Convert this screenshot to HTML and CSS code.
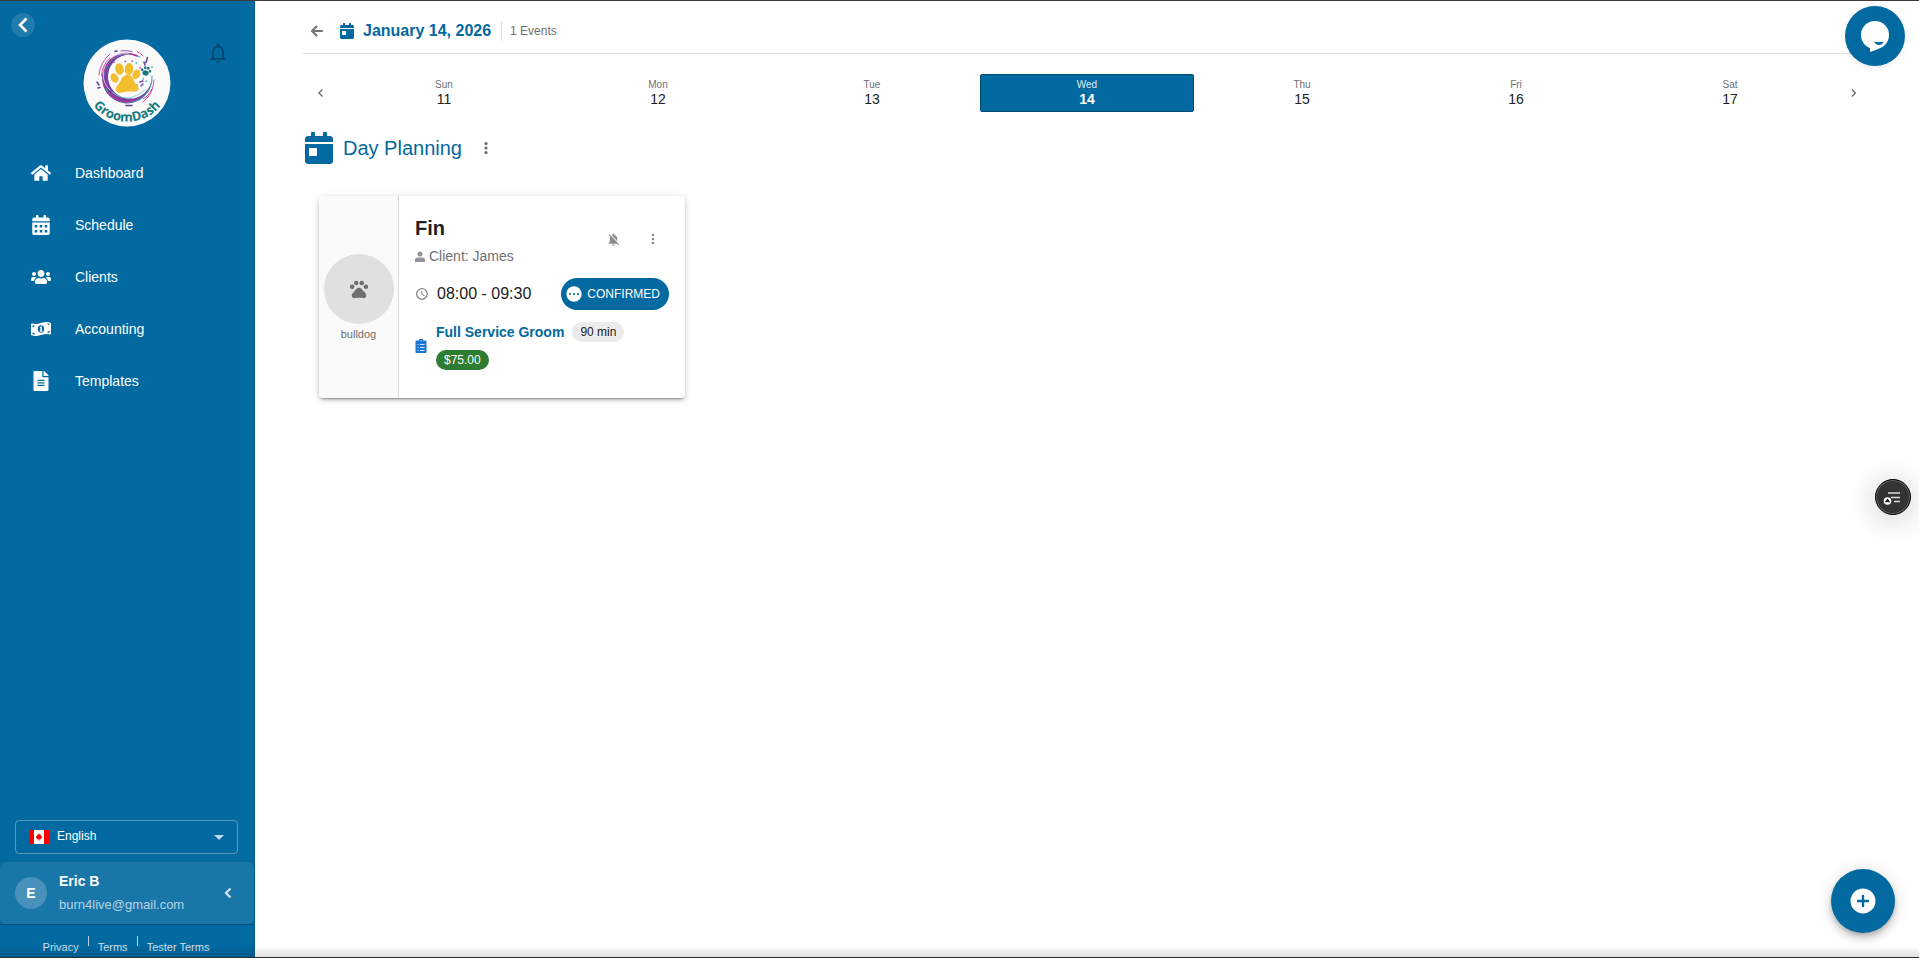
FILE: index.html
```html
<!DOCTYPE html>
<html lang="en">
<head>
<meta charset="utf-8">
<title>GroomDash – Day Planning</title>
<link rel="stylesheet" href="styles.css">
</head>
<body>
<svg class="sprite" aria-hidden="true">
  <symbol id="calendar-day" viewBox="0 0 448 512"><path d="M0 464c0 26.500 21.500 48 48 48h352c26.500 0 48-21.500 48-48V192H0v272zm64-192c0-8.800 7.200-16 16-16h96c8.800 0 16 7.200 16 16v96c0 8.800-7.200 16-16 16H80c-8.800 0-16-7.200-16-16v-96zM400 64h-48V16c0-8.800-7.200-16-16-16h-32c-8.800 0-16 7.200-16 16v48H160V16c0-8.800-7.200-16-16-16h-32c-8.800 0-16 7.200-16 16v48H48C21.500 64 0 85.500 0 112v48h448v-48c0-26.500-21.500-48-48-48z"/></symbol>
  <symbol id="dots" viewBox="0 0 24 24"><circle cx="12" cy="6" r="2"/><circle cx="12" cy="12" r="2"/><circle cx="12" cy="18" r="2"/></symbol>
  <symbol id="paw" viewBox="0 0 24 24"><circle cx="4.500" cy="9.500" r="2.500"/><circle cx="9" cy="5.500" r="2.500"/><circle cx="15" cy="5.500" r="2.500"/><circle cx="19.500" cy="9.500" r="2.500"/><path d="M17.340 14.860c-.87-1.020-1.600-1.890-2.480-2.910-.46-.54-1.050-1.080-1.750-1.320-.11-.04-.22-.07-.33-.09-.25-.04-.52-.04-.78-.04s-.53 0-.79.05c-.11.02-.22.05-.33.09-.7.24-1.280.78-1.750 1.320-.87 1.020-1.600 1.890-2.480 2.910-1.310 1.310-2.920 2.760-2.620 4.790.29 1.020 1.020 2.030 2.330 2.320.73.15 3.060-.44 5.540-.44h.18c2.480 0 4.810.58 5.540.44 1.310-.29 2.040-1.310 2.330-2.320.31-2.040-1.300-3.490-2.610-4.800z"/></symbol>
</svg>

<aside class="sidebar">
  <header class="brand">
    <button class="collapse" type="button" aria-label="Collapse menu">
      <svg width="24" height="24" viewBox="0 0 24 24" fill="none" stroke="currentColor" stroke-width="2.600"><path d="M15.500 5.500L9 12l6.500 6.500"/></svg>
    </button>
    <svg class="logo" viewBox="0 0 88 88" role="img" aria-label="GroomDash">
      <circle cx="44" cy="44" r="43.500" fill="#fafafa"/>
      <path fill="#74439f" d="M57 18A25 25 0 1 0 69 37A22 22 0 1 1 57 18Z"/>
      <g fill="none" stroke-linecap="round">
        <path d="M57 18A24.300 24.300 0 1 0 69 37" stroke="#35a9b5" stroke-width="1"/>
        <path d="M54 17A23.300 23.300 0 0 0 23 49" stroke="#b9279a" stroke-width="1.600"/>
        <path d="M26 53Q36 66 52 61" stroke="#b9279a" stroke-width="1.600"/>
        <path d="M46 15A21 21 0 0 0 27 51" stroke="#cfe9ee" stroke-width=".8"/>
        <path d="M29 53Q44 66 62 51" stroke="#7fd0d3" stroke-width=".9"/>
        <path d="M16 36Q17 23 27 15M18.500 37Q19 26 27 19M54 12.500Q58 14 60 17" stroke="#d63a9b" stroke-width=".9"/>
        <path d="M71 41Q70 56 60 63M69 50Q66 57 60 60" stroke="#d63a9b" stroke-width=".9"/>
        <path d="M38 12Q43 11 49 12.500" stroke="#74439f" stroke-width=".9"/>
        <path d="M43 66.500H49M32 12.500l2-.4M64.500 18.500l-1.500 5M61 23l1 3M14 43l2 3M15 49l2-.5" stroke="#5c3d9c" stroke-width="1.500"/>
        <path d="M57 43l3-1M58 47l2-2M53 47l1-1" stroke="#74439f" stroke-width="1.400"/>
        <path d="M42 22.500h.5M49 22h.5M57 29h.5M31 23v.5" stroke="#d63a9b" stroke-width="1.500"/>
        <path d="M53 24h.5M69 28v.5M60 40h.5M63 42v.5" stroke="#35b0b5" stroke-width="1.500"/>
      </g>
      <g fill="#f2be2e">
        <ellipse cx="36.500" cy="30" rx="4.200" ry="5.900" transform="rotate(-12 36.500 30)"/>
        <ellipse cx="46" cy="30" rx="4.200" ry="5.900" transform="rotate(6 46 30)"/>
        <ellipse cx="31.500" cy="39" rx="3.700" ry="4.900" transform="rotate(-28 31.500 39)"/>
        <ellipse cx="53.300" cy="35.300" rx="3.700" ry="4.900" transform="rotate(25 53.300 35.300)"/>
        <path d="M43 36C47 35 50 38 51 42C52 45 56 46 55.500 50C55 54 50 52 44.500 52.500C39 53 34 56 33 51C32 47 36 46 37.500 42C38.500 39 40 37 43 36Z"/>
      </g>
      <g fill="#177a7e" transform="rotate(12 63 32)"><ellipse cx="63" cy="34" rx="3.200" ry="2.600"/><circle cx="59" cy="31.500" r="1.300"/><circle cx="61.700" cy="29" r="1.400"/><circle cx="64.700" cy="29" r="1.400"/><circle cx="67" cy="31.500" r="1.300"/></g>
      <path id="logo-arc" d="M8 64A44 44 0 0 0 80 64" fill="none"/>
      <text class="logo-text"><textPath href="#logo-arc" startOffset="50%" text-anchor="middle">GroomDash</textPath></text>
    </svg>
    <button class="bell" type="button" aria-label="Notifications">
      <svg width="24" height="24" viewBox="0 0 24 24" fill="currentColor"><path d="M12 22c1.100 0 2-.9 2-2h-4c0 1.100.9 2 2 2zm6-6v-5c0-3.070-1.630-5.640-4.500-6.320V4c0-.83-.67-1.500-1.500-1.500s-1.500.67-1.500 1.500v.68C7.640 5.360 6 7.920 6 11v5l-2 2v1h16v-1l-2-2zm-2 1H8v-6c0-2.480 1.510-4.500 4-4.500s4 2.020 4 4.500v6z"/></svg>
    </button>
  </header>

  <nav class="menu">
    <a href="#dashboard"><svg viewBox="0 0 576 512"><path d="M280.370 148.260L96 300.110V464a16 16 0 0 0 16 16l112.060-.29a16 16 0 0 0 15.920-16V368a16 16 0 0 1 16-16h64a16 16 0 0 1 16 16v95.640a16 16 0 0 0 16 16.050L464 480a16 16 0 0 0 16-16V300L295.670 148.260a12.190 12.190 0 0 0-15.300 0zM571.600 251.470L488 182.560V44.050a12 12 0 0 0-12-12h-56a12 12 0 0 0-12 12v72.610L318.470 43a48 48 0 0 0-61 0L4.340 251.470a12 12 0 0 0-1.600 16.900l25.500 31A12 12 0 0 0 45.150 301l235.220-193.740a12.190 12.190 0 0 1 15.300 0L530.900 301a12 12 0 0 0 16.900-1.600l25.500-31a12 12 0 0 0-1.700-16.930z"/></svg>Dashboard</a>
    <a href="#schedule"><svg viewBox="0 0 448 512"><path fill-rule="evenodd" d="M0 192H448V464a48 48 0 0 1-48 48H48a48 48 0 0 1-48-48ZM64 256v64h64v-64ZM192 256v64h64v-64ZM320 256v64h64v-64ZM64 384v64h64v-64ZM192 384v64h64v-64ZM320 384v64h64v-64ZM400 64h-48V16c0-8.800-7.200-16-16-16h-32c-8.800 0-16 7.200-16 16v48H160V16c0-8.800-7.200-16-16-16h-32c-8.800 0-16 7.200-16 16v48H48C21.500 64 0 85.500 0 112v48h448v-48c0-26.500-21.500-48-48-48z"/></svg>Schedule</a>
    <a href="#clients"><svg viewBox="0 0 640 512"><path d="M96 224c35.300 0 64-28.700 64-64s-28.700-64-64-64-64 28.700-64 64 28.700 64 64 64zm448 0c35.300 0 64-28.700 64-64s-28.700-64-64-64-64 28.700-64 64 28.700 64 64 64zm32 32h-64c-17.600 0-33.500 7.100-45.100 18.600 40.300 22.100 68.900 62 75.100 109.400h66c17.700 0 32-14.300 32-32v-32c0-35.300-28.700-64-64-64zm-256 0c61.900 0 112-50.100 112-112S381.900 32 320 32 208 82.100 208 144s50.100 112 112 112zm76.800 32h-8.300c-20.800 10-43.900 16-68.500 16s-47.600-6-68.500-16h-8.300C179.600 288 128 339.600 128 403.200V432c0 26.500 21.500 48 48 48h288c26.500 0 48-21.500 48-48v-28.800c0-63.600-51.600-115.200-115.200-115.200zm-223.700-13.400C161.500 263.100 145.600 256 128 256H64c-35.300 0-64 28.700-64 64v32c0 17.700 14.300 32 32 32h65.900c6.300-47.400 34.900-87.300 75.200-109.400z"/></svg>Clients</a>
    <a href="#accounting"><svg viewBox="0 0 640 512"><path d="M621.160 54.460C582.370 38.190 543.550 32 504.750 32c-123.170 0-246.330 62.340-369.500 62.340-30.890 0-61.760-3.920-92.650-13.720C20 74 0 92.320 0 110.810v317.260c0 12.630 7.230 24.600 18.840 29.460C57.630 473.810 96.450 480 135.250 480c123.170 0 246.340-62.350 369.510-62.350 30.890 0 61.760 3.920 92.650 13.720C620 438 640 419.680 640 401.190V83.930c0-12.640-7.240-24.600-18.840-29.470z"/><ellipse class="cut" cx="320" cy="256" rx="100" ry="120"/><path d="M285 195l30-20h30v130h20v35h-85v-35h20v-85l-15 5z"/><path class="cut" d="M48 135q40 10 75 7q-5 50-75 55zM48 370q65 5 78 60q-40 0-78-10zM592 125q-60-5-75-45q40 0 75 10zM592 380q-35-10-75-10q5-50 75-60z"/></svg>Accounting</a>
    <a href="#templates"><svg viewBox="0 0 384 512"><path d="M224 136V0H24C10.700 0 0 10.700 0 24v464c0 13.300 10.700 24 24 24h336c13.300 0 24-10.700 24-24V160H248c-13.200 0-24-10.800-24-24zm64 236c0 6.600-5.400 12-12 12H108c-6.600 0-12-5.400-12-12v-8c0-6.600 5.400-12 12-12h168c6.600 0 12 5.400 12 12v8zm0-64c0 6.600-5.400 12-12 12H108c-6.600 0-12-5.400-12-12v-8c0-6.600 5.400-12 12-12h168c6.600 0 12 5.400 12 12v8zm0-72v8c0 6.600-5.400 12-12 12H108c-6.600 0-12-5.400-12-12v-8c0-6.600 5.400-12 12-12h168c6.600 0 12 5.400 12 12zm96-114.100v6.100H256V0h6.100c6.400 0 12.500 2.500 17 7l97.900 98c4.500 4.500 7 10.600 7 16.900z"/></svg>Templates</a>
  </nav>

  <div class="language">
    <svg width="20" height="14" viewBox="0 0 20 14" aria-hidden="true"><path fill="#fff" d="M0 0h20v14H0z"/><path fill="#f00" d="M0 0h5v14H0zM15 0h5v14h-5zM10 3l1 2 1-.5-.2 1.500L13 6l-.3 1.300.3.700-2 1.500h-.7V11h-.6V9.500H9L7 8l.3-.7L7 6l1.200 0L8 4.500 9 5z"/></svg>
    <select aria-label="Language"><option>English</option><option>Français</option></select>
    <svg class="caret" width="10" height="5" viewBox="0 0 10 5" aria-hidden="true"><path fill="currentColor" d="M0 0h10L5 5z"/></svg>
  </div>

  <button class="user" type="button">
    <span class="user-avatar">E</span>
    <span class="user-info"><span class="user-name">Eric B</span><span class="user-mail">burn4live@gmail.com</span></span>
    <svg width="20" height="20" viewBox="0 0 24 24" fill="none" stroke="#d6e6ef" stroke-width="2.500"><path d="M15 6.500L9.500 12l5.500 5.500"/></svg>
  </button>

  <footer class="legal">
    <a href="#privacy">Privacy</a><i></i><a href="#terms">Terms</a><i></i><a href="#tester-terms">Tester Terms</a>
  </footer>
</aside>

<main class="content">
  <header class="page-head">
    <button class="back" type="button" aria-label="Back"><svg width="14" height="14" viewBox="0 0 14 14" fill="none" stroke="currentColor" stroke-width="2.200" stroke-linecap="round" stroke-linejoin="round"><path d="M12 7H2.500M6.500 2.500L2 7l4.500 4.500"/></svg></button>
    <svg class="blue" width="14" height="16"><use href="#calendar-day"/></svg>
    <h1>January 14, 2026</h1>
    <span class="count">1 Events</span>
  </header>

  <div class="week">
    <button class="step" type="button" aria-label="Previous week"><svg width="16" height="16" viewBox="0 0 24 24" fill="currentColor"><path d="M16.410 16.580L11.830 12L16.410 7.410L15 6L9 12L15 18Z"/></svg></button>
    <button class="day" type="button"><small>Sun</small>11</button>
    <button class="day" type="button"><small>Mon</small>12</button>
    <button class="day" type="button"><small>Tue</small>13</button>
    <button class="day active" type="button"><small>Wed</small>14</button>
    <button class="day" type="button"><small>Thu</small>15</button>
    <button class="day" type="button"><small>Fri</small>16</button>
    <button class="day" type="button"><small>Sat</small>17</button>
    <button class="step" type="button" aria-label="Next week"><svg width="16" height="16" viewBox="0 0 24 24" fill="currentColor"><path d="M6.590 16.580L11.170 12L6.590 7.410L8 6L14 12L8 18Z"/></svg></button>
  </div>

  <div class="section-head">
    <svg class="blue" width="28" height="32"><use href="#calendar-day"/></svg>
    <h2>Day Planning</h2>
    <button class="more" type="button" aria-label="Planning options"><svg width="18" height="18" fill="currentColor"><use href="#dots"/></svg></button>
  </div>

  <article class="card">
    <div class="pet">
      <span class="pet-photo"><svg width="22" height="22" fill="currentColor"><use href="#paw"/></svg></span>
      <span>bulldog</span>
    </div>
    <div class="details">
      <div class="top">
        <div>
          <h3>Fin</h3>
          <p class="client"><svg width="10" height="11" viewBox="0 0 10 11" fill="#929292"><circle cx="5" cy="3" r="2.500"/><path d="M0 11V9Q0 6.500 3 6.500H7Q10 6.500 10 9V11Z"/></svg>Client: James</p>
        </div>
        <div class="actions">
          <button type="button" aria-label="Reminders off"><svg width="15" height="15" viewBox="0 0 24 24" fill="currentColor"><path d="M20 18.690L7.840 6.140 5.270 3.490 4 4.760l2.800 2.800v.01c-.52.99-.8 2.160-.8 3.420v5l-2 2v1h13.730l2 2L21 19.720l-1-1.030zM12 22c1.110 0 2-.89 2-2h-4c0 1.110.89 2 2 2zm6-7.320V11c0-3.080-1.640-5.640-4.500-6.320V4c0-.83-.67-1.500-1.500-1.500s-1.500.67-1.500 1.500v.68c-.5.120-1 .3-1.440.56L18 14.680z"/></svg></button>
          <button type="button" aria-label="Appointment options"><svg width="16" height="16" fill="currentColor"><use href="#dots"/></svg></button>
        </div>
      </div>
      <div class="when">
        <svg width="14" height="14" viewBox="0 0 24 24" fill="#757575"><path d="M11.990 2C6.470 2 2 6.480 2 12s4.470 10 9.990 10C17.520 22 22 17.520 22 12S17.520 2 11.990 2zM12 20c-4.420 0-8-3.580-8-8s3.580-8 8-8 8 3.580 8 8-3.580 8-8 8zm.5-13H11v6l5.250 3.150.75-1.230-4.500-2.670z"/></svg>
        <time>08:00 - 09:30</time>
        <button class="status" type="button"><svg width="16" height="16" viewBox="0 0 16 16"><circle cx="8" cy="8" r="7.700" fill="#fff"/><g fill="#0369a1"><circle cx="4" cy="8" r="1.100"/><circle cx="8" cy="8" r="1.100"/><circle cx="12" cy="8" r="1.100"/></g></svg>CONFIRMED</button>
      </div>
      <div class="service">
        <svg width="12" height="14" viewBox="0 0 12 14"><path fill="#1976d2" d="M1.500 1.500H4a2 2 0 0 1 4 0h2.500a1 1 0 0 1 1 1V13a1 1 0 0 1-1 1h-9a1 1 0 0 1-1-1V2.500a1 1 0 0 1 1-1z"/><path stroke="#e3eefb" stroke-width=".9" d="M2.500 5.500h1M5 5.500h4.500M2.500 8.500h1M5 8.500h4.500M2.500 11.500h1M5 11.500h4.500"/><circle cx="6" cy="1.800" r=".6" fill="#fff"/></svg>
        <div class="chips"><a href="#service">Full Service Groom</a><span class="chip">90 min</span><span class="chip price">$75.00</span></div>
      </div>
    </div>
  </article>
</main>

<button class="chat" type="button" aria-label="Open chat"><svg width="60" height="60" viewBox="0 0 60 60"><circle cx="30" cy="29" r="14" fill="#fff"/><path fill="#fff" d="M25 40V46Q36 43 41 37Z"/><path fill="#0369a1" d="M29 35.500Q34 36.500 39 35.500Q37 39 34 39T29 35.500Z"/></svg></button>
<button class="assist" type="button" aria-label="Accessibility menu"><svg width="34" height="34" viewBox="0 0 34 34"><path stroke="#ddd" stroke-width="1.600" d="M12 13h12M15 17.500h9M18 21.500h6"/><circle cx="11.500" cy="21" r="3.800" fill="#fff"/><path fill="#222" d="M11.500 18.500l2.600 3.300-1 .6q-1.600-.7-3.200 0l-1-.6z"/></svg></button>
<button class="fab" type="button" aria-label="Add"><svg width="26" height="26" viewBox="0 0 26 26"><circle cx="13" cy="13" r="12.500" fill="#fff"/><path stroke="#0369a1" stroke-width="2.400" stroke-linecap="round" d="M13 8v10M8 13h10"/></svg></button>
<div class="edge-shade"></div>
</body>
</html>
```

FILE: styles.css
```css
:root {
  --blue: #0369a1;
  --muted: #6f6f6f;
  --text: #212121;
}

* { box-sizing: border-box; }

body {
  margin: 0;
  min-height: 100vh;
  display: flex;
  border-top: 1px solid #3a3a3a;
  background: #fff;
  color: var(--text);
  font: 14px/20px "Liberation Sans", Arial, sans-serif;
}

h1, h2, h3, p { margin: 0; }

button {
  font: inherit;
  color: inherit;
  border: 0;
  padding: 0;
  background: none;
  cursor: pointer;
}

a { color: inherit; text-decoration: none; }
svg { display: block; flex: none; }
.sprite { position: absolute; width: 0; height: 0; }
.blue { fill: var(--blue); }

/* Sidebar */
.sidebar {
  position: sticky;
  top: 0;
  flex: none;
  width: 255px;
  height: calc(100vh - 1px);
  display: flex;
  flex-direction: column;
  background: var(--blue);
  border-right: 1px solid #035a8a;
  color: #fff;
}

.brand {
  display: grid;
  grid-template-columns: 1fr auto 1fr;
  align-items: start;
  padding: 12px 11px 20px;
}

.collapse {
  width: 24px;
  height: 24px;
  border-radius: 50%;
  background: rgba(255, 255, 255, .12);
}

.logo { width: 88px; margin-top: 26px; }
.logo-text { font: bold 13px "Open Sans", sans-serif; fill: #177a7e; }

.bell {
  justify-self: end;
  margin: 28px 13px 0 0;
  color: #034b73;
}

.menu a {
  display: flex;
  align-items: center;
  gap: 24px;
  height: 52px;
  padding-left: 31px;
}

.menu svg { width: 20px; height: 20px; fill: #fff; }
.menu .cut { fill: var(--blue); }

.language {
  display: flex;
  align-items: center;
  margin: auto 16px 8px 15px;
  height: 34px;
  padding: 0 13px;
  border: 1px solid rgba(255, 255, 255, .32);
  border-radius: 4px;
}

.language select {
  flex: 1;
  height: 32px;
  padding: 0 8px 2px;
  border: 0;
  appearance: none;
  background: transparent;
  color: inherit;
  font: 12px/16px "Liberation Sans", Arial, sans-serif;
}

.language option { color: var(--text); }
.caret { color: #c0dae8; pointer-events: none; }

.user {
  display: flex;
  align-items: center;
  gap: 12px;
  height: 62px;
  padding: 0 16px 0 15px;
  border-radius: 6px;
  background: rgba(255, 255, 255, .09);
  text-align: left;
}

.user-avatar {
  width: 32px;
  height: 32px;
  border-radius: 50%;
  background: rgba(255, 255, 255, .2);
  font-weight: bold;
  line-height: 32px;
  text-align: center;
}

.user-info { flex: 1; display: grid; gap: 4px; }
.user-name { font-weight: bold; }
.user-mail { font-size: 13px; color: #b5d3e3; }

.legal {
  display: flex;
  justify-content: center;
  gap: 9px;
  height: 34px;
  padding: 11px 2px 0 0;
  border-top: 1px solid #034b73;
  font-size: 11px;
  color: #cde1ec;
}

.legal i { width: 1px; height: 10px; background: #b5d3e3; }
.legal a { line-height: 22px; }

/* Page */
.content { flex: 1; min-width: 0; padding: 0 48px; }

.page-head {
  display: flex;
  align-items: center;
  height: 53px;
  padding: 8px 0 0 7px;
  border-bottom: 1px solid #e0e0e0;
}

.back { margin-right: 16px; color: #757575; }
.page-head h1 { margin-left: 9px; font-size: 16px; color: var(--blue); }

.count {
  margin-left: 10px;
  padding-left: 8px;
  border-left: 1px solid #dcdcdc;
  font-size: 12px;
  color: var(--muted);
}

.week { display: flex; gap: 2px; margin-top: 20px; }
.step { width: 33px; color: #6b6b6b; }
.step svg { margin: 0 auto; }

.day {
  flex: 1;
  height: 38px;
  border-radius: 2px;
  line-height: 16px;
}

.day small {
  display: block;
  font-size: 10px;
  line-height: 12px;
  color: var(--muted);
}

.day.active {
  background: var(--blue);
  border: 1px solid #034b73;
  color: #fff;
  font-weight: bold;
}

.day.active small { color: #e3eff5; font-weight: normal; }

.section-head {
  display: flex;
  align-items: center;
  margin: 20px 0 32px 2px;
}

.section-head h2 {
  margin: 0 15px 0 10px;
  font-size: 20px;
  font-weight: normal;
  color: var(--blue);
}

.more { color: #616161; }

/* Appointment card */
.card {
  display: grid;
  grid-template-columns: 80px 1fr;
  width: 366px;
  min-height: 202px;
  margin-left: 16px;
  border-radius: 4px;
  overflow: hidden;
  box-shadow: 0 3px 2px -2px rgba(0, 0, 0, .3), 0 2px 4px rgba(0, 0, 0, .18), 0 1px 8px rgba(0, 0, 0, .1);
}

.pet {
  display: flex;
  flex-direction: column;
  align-items: center;
  justify-content: center;
  padding-top: 4px;
  border-right: 1px solid #dcdcdc;
  background: #fafafa;
  color: var(--muted);
  font-size: 11px;
}

.pet-photo {
  display: grid;
  place-items: center;
  width: 70px;
  height: 70px;
  border-radius: 50%;
  background: #e0e0e0;
}

.details { padding: 19px 16px; }
.top { display: flex; justify-content: space-between; align-items: center; }
.top h3 { font-size: 20px; line-height: 26px; }

.client {
  display: flex;
  align-items: center;
  gap: 4px;
  margin-top: 4px;
  line-height: 22px;
  color: var(--muted);
}

.actions { display: flex; gap: 24px; padding: 0 8px 4px 0; color: #8c8c8c; }

.when { display: flex; align-items: center; margin-top: 11px; }
.when time { margin-left: 8px; font-size: 16px; }

.status {
  display: flex;
  align-items: center;
  gap: 5px;
  height: 32px;
  margin-left: auto;
  padding: 0 9px 0 5px;
  border-radius: 16px;
  background: var(--blue);
  color: #fff;
  font-size: 12px;
}

.service { display: flex; align-items: center; gap: 9px; margin-top: 12px; }
.chips { flex: 1; display: flex; flex-wrap: wrap; gap: 8px; }
.chips a { font-weight: bold; color: var(--blue); }

.chip {
  padding: 0 8px;
  border-radius: 10px;
  background: #ebebeb;
  font-size: 12px;
}

.chip.price { background: #2e7d32; color: #fff; }

/* Floating controls */
.chat, .assist, .fab { position: fixed; border-radius: 50%; }

.chat {
  top: 6px;
  right: 14px;
  width: 60px;
  height: 60px;
  background: var(--blue);
  box-shadow: 0 1px 6px rgba(0, 0, 0, .08);
}

.assist {
  top: 50%;
  right: 8px;
  width: 36px;
  height: 36px;
  border: 1px solid #000;
  background: #333;
  box-shadow: inset 0 0 0 1px #666, 0 4px 32px rgba(0, 0, 0, .22);
}

.fab {
  right: 24px;
  bottom: 25px;
  width: 64px;
  height: 64px;
  display: grid;
  place-items: center;
  background: var(--blue);
  box-shadow: 0 3px 5px -1px rgba(0, 0, 0, .2), 0 6px 10px rgba(0, 0, 0, .14), 0 1px 18px rgba(0, 0, 0, .12);
}

.edge-shade {
  position: fixed;
  inset: auto 0 0;
  height: 12px;
  border-bottom: 1px solid #2b2b2b;
  background: linear-gradient(transparent, rgba(0, 0, 0, .12));
  pointer-events: none;
}
```
